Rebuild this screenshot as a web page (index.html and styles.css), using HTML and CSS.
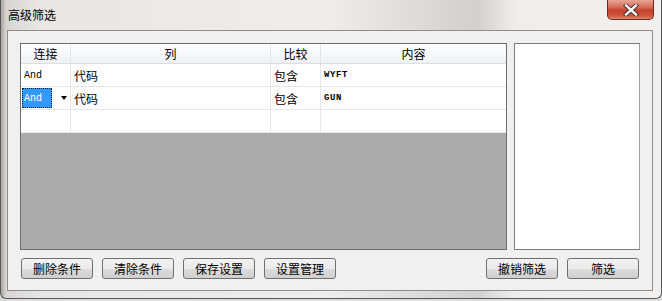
FILE: index.html
```html
<!DOCTYPE html>
<html lang="zh">
<head>
    <meta charset="UTF-8">
    <title>高级筛选</title>
    <link rel="stylesheet" href="styles.css">
</head>
<body>
    <div class="window">
        <div class="titlebar">
            <span class="title">高级筛选</span>
            <div class="close">
                <svg width="18" height="12" viewBox="0 0 18 12">
                    <path d="M4 1.5 L14 10.5 M14 1.5 L4 10.5" stroke="#3a2a2a" stroke-width="4.2" stroke-linecap="square"/>
                    <path d="M4 1.5 L14 10.5 M14 1.5 L4 10.5" stroke="#ffffff" stroke-width="2.4" stroke-linecap="square"/>
                </svg>
            </div>
        </div>

        <div class="client">
            <div class="main">
                <!-- Tabla de condiciones -->
                <div class="grid">
                    <div class="row head">
                        <div class="cell c1">连接</div>
                        <div class="cell c2">列</div>
                        <div class="cell c3">比较</div>
                        <div class="cell c4">内容</div>
                    </div>
                    <div class="row">
                        <div class="cell c1 lat">And</div>
                        <div class="cell c2">代码</div>
                        <div class="cell c3">包含</div>
                        <div class="cell c4 lat">WYFT</div>
                    </div>
                    <div class="row">
                        <div class="cell c1 editing">
                            <span class="sel lat">And</span>
                            <span class="arrow"></span>
                        </div>
                        <div class="cell c2">代码</div>
                        <div class="cell c3">包含</div>
                        <div class="cell c4 lat">GUN</div>
                    </div>
                    <div class="row">
                        <div class="cell c1"></div>
                        <div class="cell c2"></div>
                        <div class="cell c3"></div>
                        <div class="cell c4"></div>
                    </div>
                    <div class="empty"></div>
                </div>

                <div class="side"></div>
            </div>

            <div class="buttons">
                <button class="btn">删除条件</button>
                <button class="btn">清除条件</button>
                <button class="btn">保存设置</button>
                <button class="btn">设置管理</button>
                <span class="spacer"></span>
                <button class="btn">撤销筛选</button>
                <button class="btn">筛选</button>
            </div>
        </div>
    </div>
</body>
</html>
```

FILE: styles.css
```css
body {
    margin: 0;
    background: #dcdcdc;
    font-family: "Noto Sans CJK SC", "DejaVu Sans", sans-serif;
    font-size: 12px;
    color: #000;
}
.window {
    width: 662px;
    height: 299px;
    box-sizing: border-box;
    border: 1px solid #5a5a5a;
    border-top: none;
    border-radius: 0 0 6px 6px;
    padding: 0 8px 0 6px;
    background: linear-gradient(90deg, #a9a4a4 0px, #d9d5d5 5px, #e9e6e6 40px, #efecec 50%, #d2cfcf 72%, #f0eded 78%, #f2efef 100%);
}
.titlebar {
    height: 30px;
    display: flex;
    align-items: flex-start;
}
.title {
    padding: 7px 0 0 1px;
    line-height: 16px;
}
.close {
    margin-left: auto;
    margin-right: -1px;
    width: 47px;
    height: 20px;
    box-sizing: border-box;
    border: 1px solid #6b2a22;
    border-top: none;
    border-radius: 0 0 5px 5px;
    background: linear-gradient(#e9a595 0%, #d9705c 35%, #c4412c 55%, #cf5a3f 85%, #e08a70 100%);
    display: flex;
    align-items: center;
    justify-content: center;
}
.client {
    height: 261px;
    box-sizing: border-box;
    background: #f0f0f0;
    border: 1px solid #8e8e8e;
    padding: 12px 12px 0 12px;
}
.main {
    display: flex;
    gap: 7px;
}
.grid {
    width: 487px;
    height: 207px;
    box-sizing: border-box;
    border: 1px solid #6d6d6d;
    background: #ababab;
    display: flex;
    flex-direction: column;
}
.row {
    display: flex;
    height: 23px;
    background: #fff;
    border-bottom: 1px solid #e6e6ee;
    box-sizing: border-box;
}
.row.head {
    height: 20px;
    background: linear-gradient(#ffffff 0%, #f7f8fa 50%, #eef0f3 100%);
    border-bottom: 1px solid #dcdfe4;
}
.cell {
    box-sizing: border-box;
    border-right: 1px solid #e6e6ee;
    padding-left: 3px;
    display: flex;
    align-items: center;
    white-space: nowrap;
}
.head .cell {
    justify-content: center;
    padding-left: 0;
    border-right: 1px solid #e3e5e9;
}
.c1 { width: 50px; }
.c2 { width: 200px; }
.c3 { width: 50px; }
.c4 { flex: 1; border-right: none; }
.head .c4 { border-right: none; }
.lat {
    font-family: "Liberation Mono", monospace;
    font-size: 10px;
}
.c4.lat { font-weight: bold; font-size: 9px; letter-spacing: 0.6px; }
.editing {
    padding-left: 1px;
}
.sel {
    width: 30px;
    height: 20px;
    box-sizing: border-box;
    background: #3399ff;
    color: #fff;
    border: 1px dotted #1a1a1a;
    display: flex;
    align-items: center;
    padding-left: 1px;
}
.arrow {
    margin-left: 9px;
    width: 0;
    height: 0;
    border-left: 3.5px solid transparent;
    border-right: 3.5px solid transparent;
    border-top: 4px solid #000;
}
.empty {
    flex: 1;
}
.side {
    width: 126px;
    height: 207px;
    box-sizing: border-box;
    border: 1px solid #7c7c7c;
    border-right-color: #a0a0a0;
    background: #fff;
}
.buttons {
    display: flex;
    gap: 9px;
    margin-top: 8px;
    padding-left: 1px;
}
.spacer {
    flex: 1;
}
.btn {
    width: 72px;
    height: 21px;
    padding: 0;
    box-sizing: border-box;
    border: 1px solid #707070;
    border-radius: 3px;
    background: linear-gradient(#f2f2f2 0%, #ebebeb 50%, #dddddd 51%, #cfcfcf 100%);
    font-family: "Noto Sans CJK SC", sans-serif;
    font-size: 12px;
    color: #000;
    line-height: 18px;
}
.btn:nth-last-child(1) {
    margin-right: 1px;
}
```
